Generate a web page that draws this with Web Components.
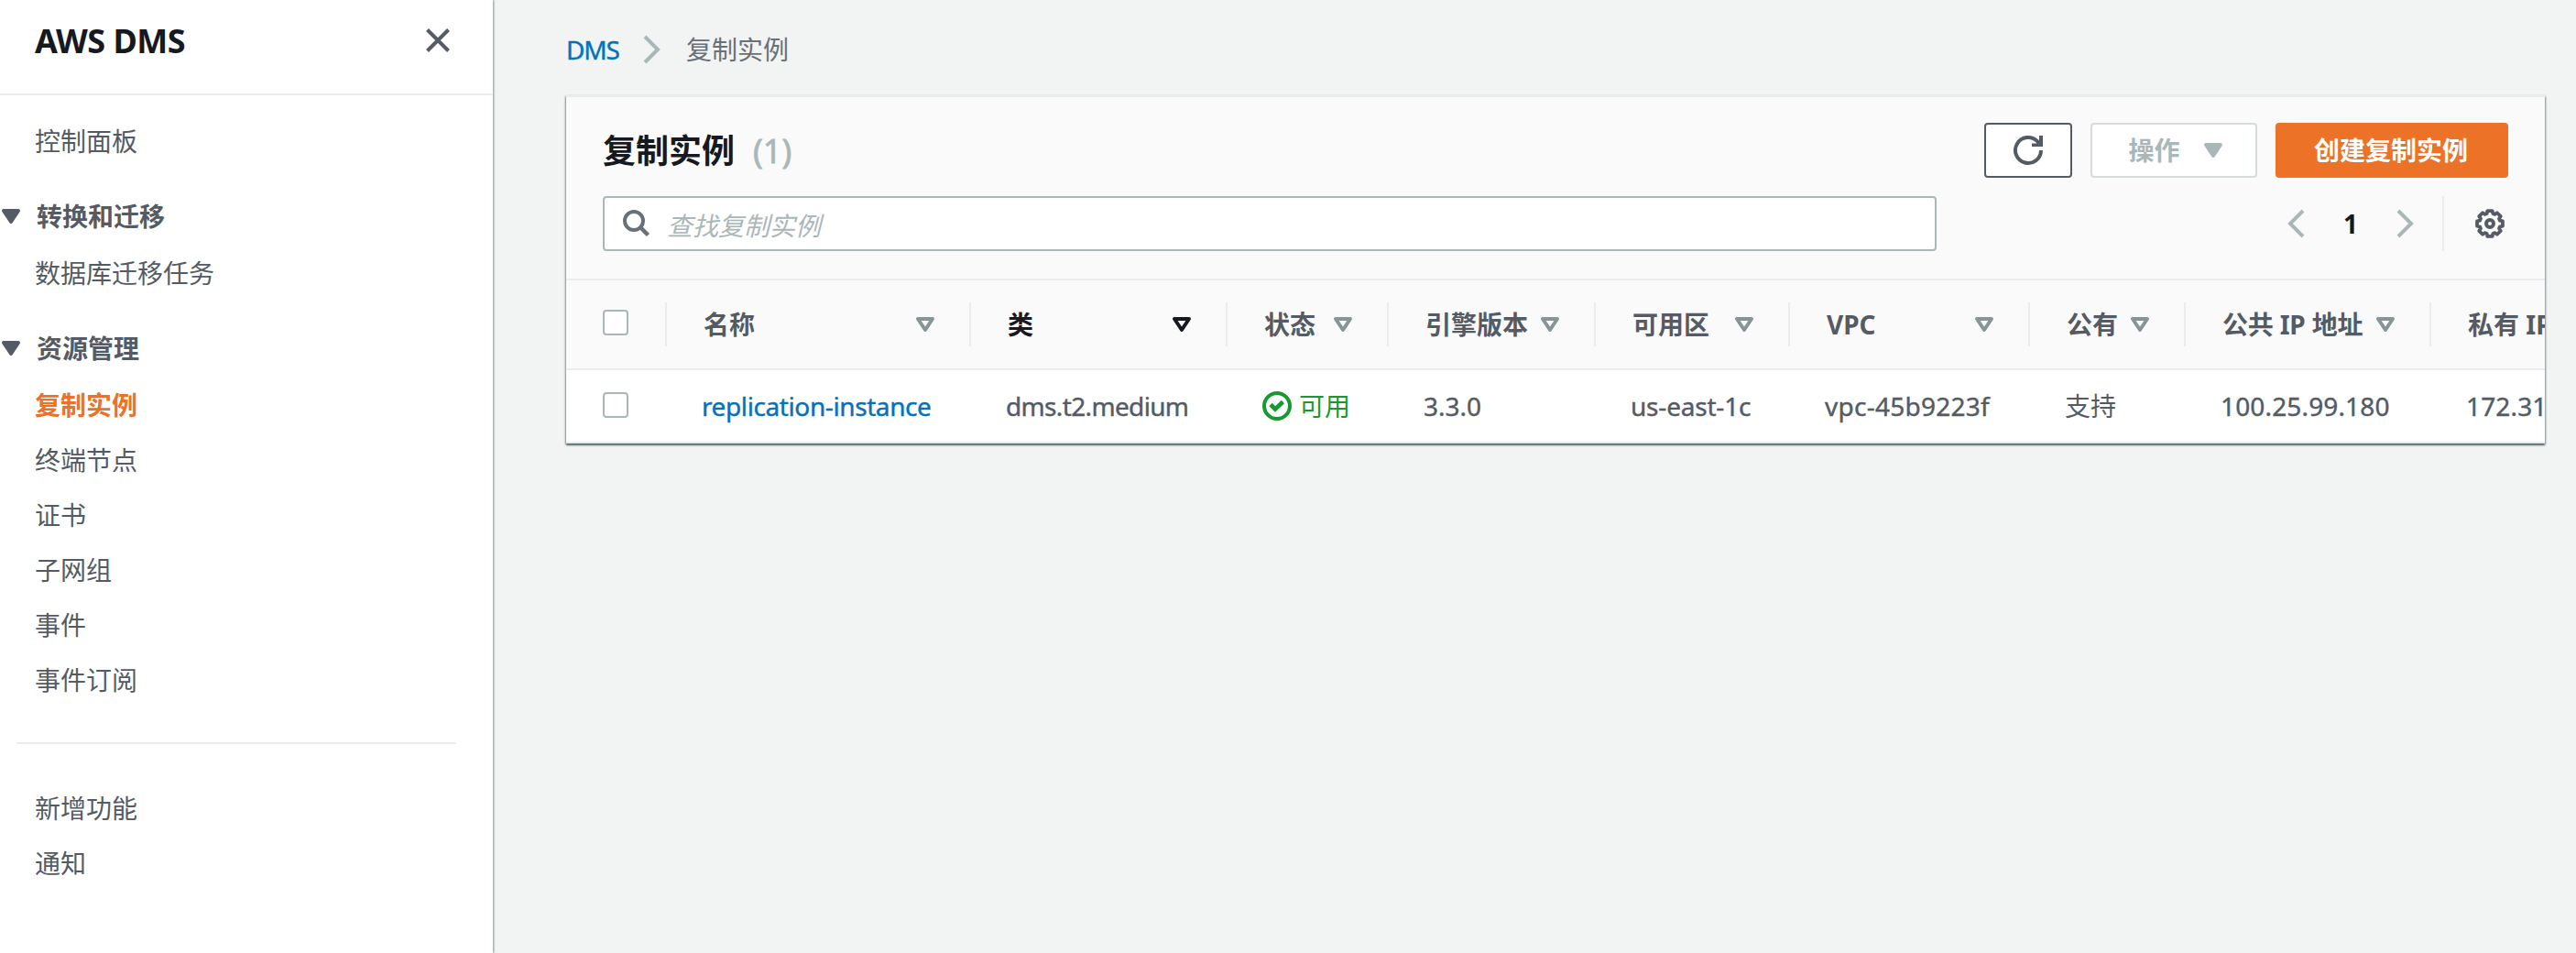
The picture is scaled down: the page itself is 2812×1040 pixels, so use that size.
<!DOCTYPE html>
<html lang="zh-CN">
<head>
<meta charset="utf-8">
<title>AWS DMS</title>
<style>
html,body{margin:0;height:100%}
body{font:28px/40px "Noto Sans","Noto Sans CJK SC",sans-serif;color:#545b64;background:#f2f3f3;overflow:hidden}
</style>
</head>
<body>
<dms-app></dms-app>
<script>
function define(name, html, setup) {
  const t = document.createElement('template');
  t.innerHTML = html;
  customElements.define(name, class extends HTMLElement {
    constructor() {
      super();
      this.attachShadow({ mode: 'open' }).appendChild(t.content.cloneNode(true));
    }
    connectedCallback() { if (setup) setup(this, this.shadowRoot); }
  });
}

// Outline of an eight-toothed cog centred in a 32px box.
function cog() {
  const pts = [];
  for (let i = 0; i < 8; i++) {
    for (const [off, r] of [[-11, 14.2], [11, 14.2], [17, 11.4], [28, 11.4]]) {
      const a = (i * 45 + off) * Math.PI / 180;
      pts.push((16 + r * Math.sin(a)).toFixed(2) + ' ' + (16 - r * Math.cos(a)).toFixed(2));
    }
  }
  return 'M' + pts.join('L') + 'z';
}

const ICONS = {
  close: [26, 26, '<path d="M1.500 1.500l23 23M24.500 1.500l-23 23" fill="none" stroke="currentColor" stroke-width="4"/>'],
  caret: [20, 16, '<path d="M2 2h16l-8 12z" fill="currentColor" stroke="currentColor" stroke-width="4" stroke-linejoin="round"/>'],
  sort: [20, 16, '<path d="M2 2h16l-8 12z" fill="none" stroke="currentColor" stroke-width="4" stroke-linejoin="round"/>'],
  next: [20, 32, '<path d="M2 2l14 14L2 30" fill="none" stroke="currentColor" stroke-width="4"/>'],
  prev: [20, 32, '<path d="M18 2L4 16l14 14" fill="none" stroke="currentColor" stroke-width="4"/>'],
  search: [30, 30, '<circle cx="12" cy="12" r="10" fill="none" stroke="currentColor" stroke-width="4"/><path d="M19.500 19.500l8 8" stroke="currentColor" stroke-width="4.500"/>'],
  refresh: [32, 32, '<path d="M30 16a14 14 0 1 1-4-9.800L29 9.500" fill="none" stroke="currentColor" stroke-width="4"/><path d="M28 0h4v12H20V8.500h5l3-3z" fill="currentColor"/>'],
  check: [32, 32, '<circle cx="16" cy="16" r="14" fill="none" stroke="currentColor" stroke-width="4"/><path d="M9 14.500l5 5 8.500-8" fill="none" stroke="currentColor" stroke-width="4.600"/>'],
  gear: [32, 32, `<path d="${cog()}" fill="none" stroke="currentColor" stroke-width="3.800" stroke-linejoin="round"/><circle cx="16" cy="16" r="4" fill="none" stroke="currentColor" stroke-width="4"/>`]
};
define('dms-icon', '<style>:host{display:block;flex:none}svg{display:block;overflow:visible}</style><span></span>', (el, r) => {
  const [w, h, body] = ICONS[el.getAttribute('name')];
  r.querySelector('span').innerHTML = `<svg width="${w}" height="${h}" viewBox="0 0 ${w} ${h}">${body}</svg>`;
});

define('nav-link', `<style>
:host{display:flex;align-items:center;height:60px;padding-left:38px}
:host([active]){color:#eb7226;font-weight:700}
</style><slot></slot>`);

define('nav-group', `<style>
:host{display:block;padding-top:20px}
header{display:flex;align-items:center;height:64px;padding-left:2px;gap:18px;font-weight:700}
</style><header><dms-icon name="caret"></dms-icon><span></span></header><slot></slot>`, (el, r) => {
  r.querySelector('span').textContent = el.getAttribute('label');
});

define('side-nav', `<style>
:host{display:block;width:538px;flex:none;background:#fff;box-shadow:1px 0 2px 0 #879596}
.top{display:flex;align-items:flex-start;justify-content:space-between;height:104px;box-sizing:border-box;padding:25px 47px 0 38px;border-bottom:2px solid #eaeded}
h1{margin:0;font-size:36px;line-height:40px;color:#16191f;letter-spacing:-.5px}
.top dms-icon{margin-top:6px}
nav{padding-top:20px}
hr{border:0;height:2px;background:#eaeded;margin:38px 40px 40px 18px}
</style>
<div class="top"><h1>AWS DMS</h1><dms-icon name="close"></dms-icon></div>
<nav>
<nav-link>控制面板</nav-link>
<nav-group label="转换和迁移"><nav-link>数据库迁移任务</nav-link></nav-group>
<nav-group label="资源管理"><nav-link active>复制实例</nav-link><nav-link>终端节点</nav-link><nav-link>证书</nav-link><nav-link>子网组</nav-link><nav-link>事件</nav-link><nav-link>事件订阅</nav-link></nav-group>
<hr>
<nav-link>新增功能</nav-link><nav-link>通知</nav-link>
</nav>`);

define('bread-crumb', `<style>
:host{display:flex;align-items:center;height:40px;color:#687078}
a{color:#0073bb;width:57px;letter-spacing:-1.2px;-webkit-text-stroke:.4px}
dms-icon{color:#aab7b8;margin:0 27px 0 27px}
</style><a>DMS</a><dms-icon name="next"></dms-icon><span>复制实例</span>`);

define('dms-button', `<style>
:host{display:flex;align-items:center;justify-content:center;box-sizing:border-box;height:60px;border:2px solid #545b64;border-radius:4px;background:#fff;font-weight:700;gap:26px}
:host([disabled]){color:#aab7b8;border-color:#d5dbdb;padding-left:3px}
:host([primary]){color:#fff;background:#eb7226;border-color:#eb7226;padding-right:2px}
</style><slot></slot>`);

define('check-box', `<style>:host{display:block;box-sizing:border-box;width:28px;height:28px;border:2px solid #aab7b8;border-radius:4px;background:#fff}</style>`);

define('head-cell', `<style>
:host{display:flex;align-items:center;justify-content:space-between;box-sizing:border-box;height:48px;border-right:2px solid #eaeded;padding:0 38px 0 40px;font-weight:700;white-space:nowrap;min-width:0}
:host([sorted]){color:#16191f}
dms-icon{color:#879596}
:host([sorted]) dms-icon{color:#16191f}
:host(:last-of-type){border:0}
</style><slot></slot><dms-icon name="sort"></dms-icon>`);

define('data-cell', `<style>
:host{display:flex;align-items:center;gap:8px;padding-left:38px;white-space:nowrap;min-width:0;-webkit-text-stroke:.4px}
:host([link]){color:#0073bb}
:host([cjk]),:host([ok]){-webkit-text-stroke:0}
:host([ok]){color:#16992f}
</style><slot></slot>`);

define('data-table', `<style>
:host{display:block;overflow:hidden}
.row{display:grid;grid-template-columns:110px 332px 280px 176px 226px 212px 262px 170px 268px 300px;align-items:center;box-sizing:border-box;border-bottom:2px solid #eaeded;width:2336px}
.head{height:98px;background:#fafafa}
.body{height:80px;background:#fff}
.pick{display:flex;align-items:center;box-sizing:border-box;height:48px;padding-left:40px}
.head .pick{border-right:2px solid #eaeded}
check-box{margin-top:-4px}
.body check-box{margin-top:-2px}
</style>
<div class="row head"><div class="pick"><check-box></check-box></div>
<head-cell>名称</head-cell><head-cell sorted>类</head-cell><head-cell>状态</head-cell><head-cell>引擎版本</head-cell><head-cell>可用区</head-cell><head-cell>VPC</head-cell><head-cell>公有</head-cell><head-cell><span style="letter-spacing:-.2px">公共 IP 地址</span></head-cell><head-cell>私有 IP 地址</head-cell></div>
<div class="row body"><div class="pick"><check-box></check-box></div>
<data-cell link style="letter-spacing:-.4px">replication-instance</data-cell><data-cell style="letter-spacing:-.65px">dms.t2.medium</data-cell><data-cell ok><dms-icon name="check"></dms-icon>可用</data-cell><data-cell>3.3.0</data-cell><data-cell style="letter-spacing:-.2px">us-east-1c</data-cell><data-cell style="letter-spacing:.25px">vpc-45b9223f</data-cell><data-cell cjk>支持</data-cell><data-cell style="letter-spacing:.15px">100.25.99.180</data-cell><data-cell style="letter-spacing:.15px">172.31</data-cell></div>`);

define('instance-panel', `<style>
:host{display:block;width:2160px;box-sizing:border-box;border-top:2px solid #eaeded;background:#fafafa;box-shadow:0 2px 2px 0 rgba(0,28,36,.5),1px 1px 2px 0 rgba(0,28,36,.3),-1px 1px 2px 0 rgba(0,28,36,.3)}
.tools{padding:28px 40px 30px;border-bottom:2px solid #eaeded}
.line{display:flex;align-items:center;height:60px}
.line+.line{margin-top:20px}
h2{margin:0;font-size:36px;color:#16191f;flex:1;padding-top:2px}
h2 span{font-weight:400;color:#aab7b8;margin-left:20px;-webkit-text-stroke:.8px}
.actions{display:flex;gap:20px}
.search{display:flex;align-items:center;gap:18px;box-sizing:border-box;width:1456px;height:60px;border:2px solid #aab7b8;border-radius:4px;background:#fff;padding-left:20px;color:#687078}
.search i{color:#aab7b8;padding-top:3px}
.pages{display:flex;align-items:center;margin-left:auto;color:#aab7b8}
.pages b{color:#16191f;width:16px;margin:0 42px;text-align:center}
.pages .bar{width:2px;height:60px;background:#eaeded;margin:0 34px 0 30px}
.gear{color:#545b64;margin-right:4px}
</style>
<div class="tools">
<div class="line"><h2>复制实例<span>(1)</span></h2>
<div class="actions"><dms-button style="width:96px"><dms-icon name="refresh"></dms-icon></dms-button><dms-button disabled style="width:182px">操作<dms-icon name="caret"></dms-icon></dms-button><dms-button primary style="width:254px">创建复制实例</dms-button></div></div>
<div class="line"><div class="search"><dms-icon name="search"></dms-icon><i>查找复制实例</i></div>
<div class="pages"><dms-icon name="prev"></dms-icon><b>1</b><dms-icon name="next"></dms-icon><div class="bar"></div><dms-icon class="gear" name="gear"></dms-icon></div></div>
</div>
<data-table></data-table>`);

define('dms-app', `<style>
:host{display:flex;height:1040px}
main{flex:1;min-width:0;padding:34px 0 0 80px}
instance-panel{margin-top:30px}
</style><side-nav></side-nav><main><bread-crumb></bread-crumb><instance-panel></instance-panel></main>`);
</script>
</body>
</html>
